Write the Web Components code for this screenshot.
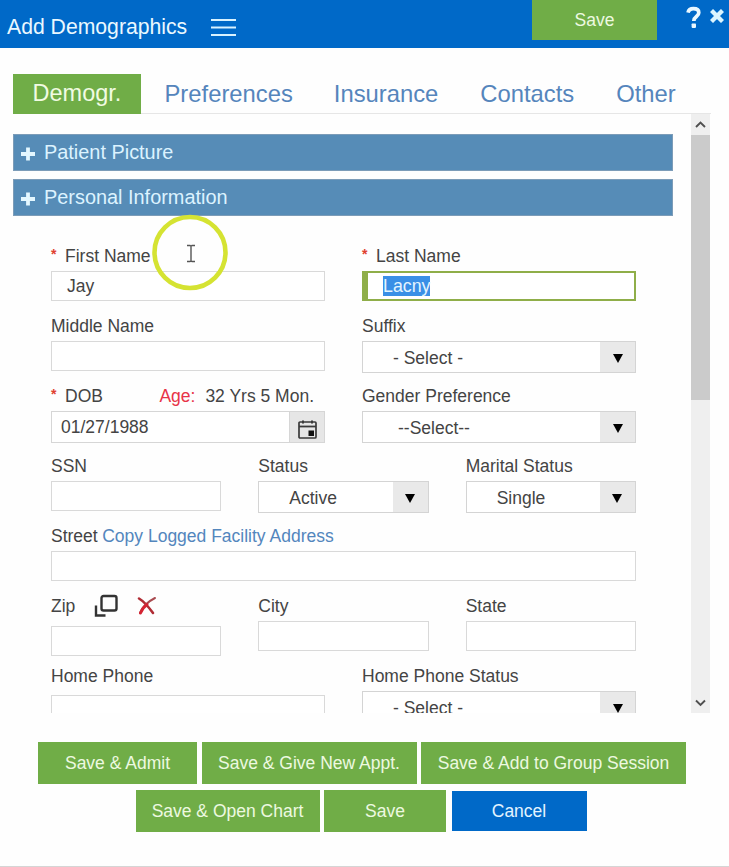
<!DOCTYPE html>
<html lang="en">
<head>
<meta charset="utf-8">
<title>Add Demographics</title>
<style>
  body {
    margin: 0;
    background: #fefefe;
    font-family: "Liberation Sans", Arial, sans-serif;
    font-size: 17.5px;
    color: #444;
  }
</style>
</head>
<body>
<demographics-page></demographics-page>

<script>
class PageHeader extends HTMLElement {
    constructor() {
        super();
        this.attachShadow({mode: 'open'}).innerHTML = `
        <style>
        :host {
            display: flex;
            height: 48px;
            box-sizing: border-box;
            padding-left: 7px;
            background: #0069c8;
            color: #eaf8ff;
          }

          .title {
            font-size: 21.2px;
            line-height: 54px;
            width: 204px;
            white-space: nowrap;
          }

          .menu {
            margin-top: 18px;
            margin-right: auto;
          }

          action-button {
            width: 125px;
            height: 40px;
          }

          .help {
            margin: 6px 8px 0 29px;
          }

          .close {
            margin: 9px 5px 0 0;
          }

          svg {
            flex: none;
          }
        </style>
        <div class="title"><slot></slot></div>
        <svg class="menu" width="26" height="20" fill="none" stroke="#d8f2ff" stroke-width="2.2"><path d="M0 2h25M0 9.5h25M0 17h25"/></svg>
        <action-button>Save</action-button>
        <svg class="help" width="16" height="23" viewBox="0 0 16 23">
          <path d="M2 6.600C2.600 3.800 4.600 2.600 7.400 2.600c3.200 0 5.400 1.500 5.400 4.100 0 4-5 3.600-5 8.200" fill="none" stroke="#eaf8ff" stroke-width="3.700"/>
          <rect x="5.600" y="17.500" width="4.400" height="4.400" rx=".8" fill="#eaf8ff"/>
        </svg>
        <svg class="close" width="14" height="14" fill="none" stroke="#dcf5ff" stroke-width="4.300"><path d="M1.500 1.500l11 11M12.500 1.500l-11 11"/></svg>
        `;
    }
}

class TabItem extends HTMLElement {
    constructor() {
        super();
        this.attachShadow({mode: 'open'}).innerHTML = `
        <style>
        :host {
            display: block;
            height: 40px;
            line-height: 39px;
            font-size: 23.8px;
            color: #5585bc;
            white-space: nowrap;
          }

          :host([active]) {
            width: 128px;
            background: #70ad47;
            color: #f1fbe2;
            font-size: 23.5px;
            text-align: center;
          }
        </style>
        <slot></slot>
        `;
    }
}

class SectionBar extends HTMLElement {
    constructor() {
        super();
        this.attachShadow({mode: 'open'}).innerHTML = `
        <style>
        :host {
            display: flex;
            align-items: center;
            height: 37px;
            padding-left: 7px;
            gap: 9px;
            background: #568cb7;
            border: 1px solid #7c9cb8;
            box-sizing: border-box;
            color: #dcf3ff;
            font-size: 19.9px;
          }

          svg {
            margin-top: 3px;
          }
        </style>
        <svg width="14" height="14" fill="none" stroke="#e4f7ff" stroke-width="3.800"><path d="M7 0.500v13M0 7h14"/></svg>
        <span><slot></slot></span>
        `;
    }
}

class FormField extends HTMLElement {
    constructor() {
        super();
        this.attachShadow({mode: 'open'});
    }

    connectedCallback() {
        const star = this.hasAttribute('required') ? '<i>*</i>' : '';
        this.shadowRoot.innerHTML = `
        <style>
        :host {
            display: block;
            height: 70px;
            min-width: 0;
          }

          .label {
            display: flex;
            align-items: center;
            height: 30px;
            white-space: pre;
          }

          i {
            width: 14px;
            margin-top: -4px;
            font-style: normal;
            font-weight: bold;
            font-size: 14px;
            color: #e0402f;
          }

          :host([tall]) .label {
            height: var(--label-height, 35px);
            align-items: flex-start;
            line-height: 30px;
          }
        </style>
        <div class="label">${star}<span>${this.getAttribute('label')}</span><slot name="extra"></slot></div>
        <slot></slot>
        `;
    }
}

class TextBox extends HTMLElement {
    constructor() {
        super();
        this.attachShadow({mode: 'open'}).innerHTML = `
        <style>
        :host {
            display: flex;
            align-items: center;
            height: 30px;
            box-sizing: border-box;
            padding-left: 15px;
            border: 1px solid #d9d9d9;
            background: #fff;
          }

          :host([focused]) {
            border: 2px solid #8fae49;
            border-left-width: 6px;
          }

          :host([focused]) span {
            background: #3a8fe6;
            color: #e4f4ff;
            line-height: 20px;
            font-size: 17.8px;
          }
        </style>
        <span><slot></slot></span>
        `;
    }
}

class SelectBox extends HTMLElement {
    constructor() {
        super();
        this.attachShadow({mode: 'open'}).innerHTML = `
        <style>
        :host {
            display: flex;
            height: 32px;
            box-sizing: border-box;
            border: 1px solid #d4d4d4;
            background: #fff;
            line-height: 32px;
          }

          span {
            flex: 1;
            padding-left: 30px;
          }

          .arrow {
            display: flex;
            align-items: center;
            justify-content: center;
            width: 35px;
            background: #e9e9e9;
          }

          svg {
            margin-top: 2px;
          }
        </style>
        <span><slot></slot></span>
        <div class="arrow"><svg width="10" height="10"><path d="M0 1h10L5 10z" fill="#000"/></svg></div>
        `;
    }
}

class DateBox extends HTMLElement {
    constructor() {
        super();
        this.attachShadow({mode: 'open'}).innerHTML = `
        <style>
        :host {
            display: flex;
            height: 32px;
            box-sizing: border-box;
            border: 1px solid #d6d6d6;
            background: #fff;
            line-height: 31px;
          }

          span {
            flex: 1;
            padding-left: 9px;
          }

          .button {
            width: 35px;
            padding: 8px 0 0 8px;
            box-sizing: border-box;
            border-left: 1px solid #d6d6d6;
            background: #e6e6e6;
            line-height: 0;
          }
        </style>
        <span><slot></slot></span>
        <div class="button">
          <svg width="19" height="20" fill="none" stroke="#3a3a3a">
            <rect x="1" y="2" width="17" height="16" rx="1" stroke-width="1.700"/>
            <path d="M1 6.500h17" stroke-width="1.800"/>
            <path d="M5 0.500v3M14 0.500v3" stroke-width="2"/>
            <rect x="11" y="11" width="4.500" height="4.500" fill="#111" stroke="#111"/>
          </svg>
        </div>
        `;
    }
}

class ActionButton extends HTMLElement {
    constructor() {
        super();
        this.attachShadow({mode: 'open'}).innerHTML = `
        <style>
        :host {
            display: flex;
            align-items: center;
            justify-content: center;
            height: 42px;
            background: #70ad47;
            color: #edf9e0;
            white-space: nowrap;
            font-size: 17.5px;
          }

          :host([primary]) {
            height: 40px;
            background: #0069c8;
            color: #e3f4ff;
          }
        </style>
        <span><slot></slot></span>
        `;
    }
}

class ScrollTrack extends HTMLElement {
    constructor() {
        super();
        this.attachShadow({mode: 'open'}).innerHTML = `
        <style>
        :host {
            display: flex;
            flex-direction: column;
            width: 19px;
            background: #efefef;
          }

          .thumb {
            height: 265px;
            background: #cbcbcb;
            margin-bottom: auto;
          }

          svg {
            display: block;
            flex: none;
          }
        </style>
        <svg width="19" height="21" fill="none" stroke="#505050" stroke-width="1.900"><path d="M5 13l4.500-4.500L14 13"/></svg>
        <div class="thumb"></div>
        <svg width="19" height="21" fill="none" stroke="#505050" stroke-width="1.900"><path d="M5 8.500l4.500 4.500L14 8.500"/></svg>
        `;
    }
}

// Highlighted text cursor drawn above the form
class PointerRing extends HTMLElement {
    constructor() {
        super();
        this.attachShadow({mode: 'open'}).innerHTML = `
        <style>
        :host {
            position: absolute;
            left: 151px;
            top: 214px;
            width: 78px;
            height: 78px;
            pointer-events: none;
          }
        </style>
        <svg width="78" height="78" fill="none">
          <circle cx="39" cy="38.500" r="35.500" stroke="#d5e332" stroke-width="4.600"/>
          <path d="M36 31.500h3l1 .8 1-.8h3M40 32v15M36 47.500h3l1-.8 1 .8h3" stroke="#555" stroke-width="1.400"/>
        </svg>
        `;
    }
}

class DemographicsPage extends HTMLElement {
    constructor() {
        super();
        this.attachShadow({mode: 'open'}).innerHTML = `
        <style>
        :host {
            display: flex;
            flex-direction: column;
            height: 867px;
            box-sizing: border-box;
            border-bottom: 1px solid #d5d5d5;
            overflow: hidden;
          }

          nav {
            display: flex;
            margin: 26px 18px 0 13px;
            height: 40px;
            flex: none;
            box-shadow: inset 0 -1px #e6e6e6;
          }

          nav tab-item:nth-child(2) { margin-left: 23.500px; }
          nav tab-item:nth-child(3) { margin-left: 41px; }
          nav tab-item:nth-child(4) { margin-left: 42px; }
          nav tab-item:nth-child(5) { margin-left: 42px; }

          main {
            display: flex;
            justify-content: space-between;
            height: 599px;
            flex: none;
            margin: 0 19px 0 13px;
            overflow: hidden;
          }

          .form {
            width: 660px;
            padding-top: 20px;
            height: 579px;
            overflow: hidden;
          }

          section-bar + section-bar {
            margin-top: 8px;
          }

          .fields {
            padding: 25px 37px 0 38px;
          }

          .row {
            display: grid;
            grid-template-columns: 1fr 1fr;
            column-gap: 37px;
          }

          .three { grid-template-columns: 1fr 1fr 1fr; }
          .one { grid-template-columns: 1fr; }

          .age {
            margin-left: auto;
            padding-right: 11px;
          }

          .age b {
            font-weight: normal;
            color: #e83348;
            margin-right: 10px;
          }

          a {
            color: #5386bd;
            margin-left: 4.500px;
          }

          .icons {
            display: flex;
            gap: 18px;
            margin: 3px 0 0 19px;
          }

          footer {
            display: flex;
            flex-direction: column;
            align-items: center;
            gap: 6px;
            margin: 29px 5px 0 0;
          }

          footer div {
            display: flex;
            align-items: center;
            gap: 4.500px;
          }

          footer div + div {
            margin-right: 2px;
          }
        </style>
        <page-header>Add Demographics</page-header>
        <nav>
          <tab-item active>Demogr.</tab-item>
          <tab-item>Preferences</tab-item>
          <tab-item>Insurance</tab-item>
          <tab-item>Contacts</tab-item>
          <tab-item>Other</tab-item>
        </nav>
        <main>
          <div class="form">
            <section-bar>Patient Picture</section-bar>
            <section-bar>Personal Information</section-bar>
            <div class="fields">
              <div class="row">
                <form-field label="First Name" required><text-box>Jay</text-box></form-field>
                <form-field label="Last Name" required><text-box focused>Lacny</text-box></form-field>
              </div>
              <div class="row">
                <form-field label="Middle Name"><text-box></text-box></form-field>
                <form-field label="Suffix"><select-box>- Select -</select-box></form-field>
              </div>
              <div class="row">
                <form-field label="DOB" required>
                  <span class="age" slot="extra"><b>Age:</b>32 Yrs 5 Mon.</span>
                  <date-box>01/27/1988</date-box>
                </form-field>
                <form-field label="Gender Preference"><select-box style="text-indent: 5px">--Select--</select-box></form-field>
              </div>
              <div class="row three">
                <form-field label="SSN"><text-box></text-box></form-field>
                <form-field label="Status"><select-box>Active</select-box></form-field>
                <form-field label="Marital Status"><select-box>Single</select-box></form-field>
              </div>
              <div class="row one">
                <form-field label="Street">
                  <a slot="extra">Copy Logged Facility Address</a>
                  <text-box></text-box>
                </form-field>
              </div>
              <div class="row three">
                <form-field label="Zip" tall>
                  <span class="icons" slot="extra">
                    <svg width="25" height="26" fill="none" stroke="#333">
                      <rect x="7.500" y="2" width="15" height="14.500" rx="2" stroke-width="2.400"/>
                      <path d="M2 11.500v10h9.500" stroke-width="2.400"/>
                    </svg>
                    <svg width="20" height="24" fill="none" stroke-linecap="round">
                      <path d="M2 4.500c5 3 10 9 14 14.500" stroke="#b02c34" stroke-width="2.600"/>
                      <path d="M18 4C12 7 6 12 3 19" stroke="#a94b50" stroke-width="2"/>
                      <path d="M10 10.500c-3 2-5 5-6.500 8.500" stroke="#d42332" stroke-width="3"/>
                    </svg>
                  </span>
                  <text-box></text-box>
                </form-field>
                <form-field label="City"><text-box></text-box></form-field>
                <form-field label="State"><text-box></text-box></form-field>
              </div>
              <div class="row">
                <form-field label="Home Phone" tall style="--label-height: 34px"><text-box></text-box></form-field>
                <form-field label="Home Phone Status"><select-box>- Select -</select-box></form-field>
              </div>
            </div>
          </div>
          <scroll-track></scroll-track>
        </main>
        <footer>
          <div>
            <action-button style="width: 159px">Save &amp; Admit</action-button>
            <action-button style="width: 215px">Save &amp; Give New Appt.</action-button>
            <action-button style="width: 265px">Save &amp; Add to Group Session</action-button>
          </div>
          <div>
            <action-button style="width: 184px">Save &amp; Open Chart</action-button>
            <action-button style="width: 122px">Save</action-button>
            <action-button style="width: 135px; margin-left: 1px" primary>Cancel</action-button>
          </div>
        </footer>
        <pointer-ring></pointer-ring>
        `;
    }
}

customElements.define('action-button', ActionButton);
customElements.define('page-header', PageHeader);
customElements.define('tab-item', TabItem);
customElements.define('section-bar', SectionBar);
customElements.define('form-field', FormField);
customElements.define('text-box', TextBox);
customElements.define('select-box', SelectBox);
customElements.define('date-box', DateBox);
customElements.define('scroll-track', ScrollTrack);
customElements.define('pointer-ring', PointerRing);
customElements.define('demographics-page', DemographicsPage);
</script>
</body>
</html>
